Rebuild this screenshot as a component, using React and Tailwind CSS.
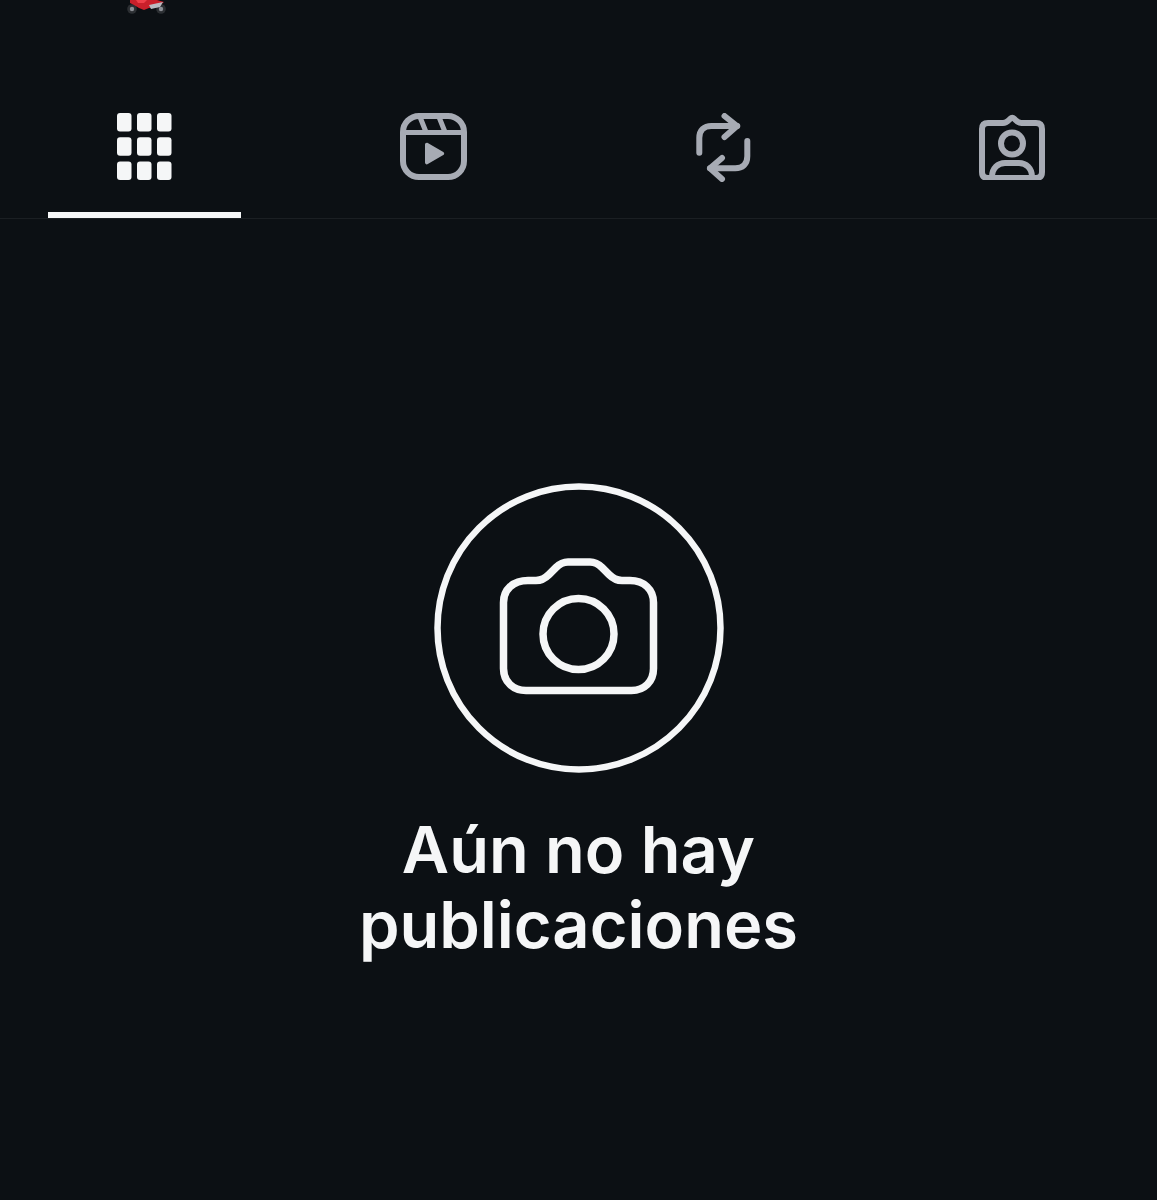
const gridCells = [0, 24.200, 48.400].flatMap((y) =>
  [0, 20, 40].map((x) => ({ x, y }))
);

function Moto() {
  return (
    <svg width="44" height="15" viewBox="0 0 44 15" fill="none">
      <circle cx="7" cy="9" r="4.800" fill="#2c2f33" />
      <circle cx="7" cy="9" r="2.200" fill="#8b8e94" />
      <circle cx="36" cy="9" r="4.800" fill="#2c2f33" />
      <circle cx="36" cy="9" r="2.200" fill="#8b8e94" />
      <path d="M5 0h27l7 2-6 5-9 1-5 2-5-2-5-3-4-2z" fill="#c9202b" />
      <path d="M24 5l14-3-3 5-9 2z" fill="#b9bcc2" />
      <path d="M11 0h11l-3 3h-6z" fill="#ee3f49" />
    </svg>
  );
}

function GridIcon() {
  return (
    <svg width="55" height="67" viewBox="0 0 55 67" fill="#f5f6f7">
      {gridCells.map((c) => (
        <rect key={`${c.x}-${c.y}`} x={c.x} y={c.y} width="14.500" height="18.500" rx="3" />
      ))}
    </svg>
  );
}

function ReelsIcon() {
  return (
    <svg width="67" height="67" viewBox="0 0 67 67" fill="none" stroke="#a7abb4" strokeWidth="6">
      <rect x="3" y="3" width="61" height="61" rx="16" />
      <path d="M3 19.500h61" strokeWidth="5" />
      <path d="M20 4l6 15M39 4l6 15" strokeWidth="5" />
      <path
        d="M25 31.500c0-1.500 1.500-2.300 2.800-1.600l15.500 9c1.200.7 1.200 2.500 0 3.200l-15.500 9c-1.300.8-2.800-.1-2.800-1.600z"
        fill="#a7abb4"
        stroke="none"
      />
    </svg>
  );
}

function RepostIcon() {
  return (
    <svg width="55" height="69" viewBox="0 0 55 69" fill="none" stroke="#a7abb4" strokeWidth="6" strokeLinecap="round" strokeLinejoin="round">
      <path d="M3.300 39.700V25c0-8 5-12 12-12h26" />
      <path d="M28.500 3l12.500 10-12.500 11" />
      <path d="M51.300 28v15.300c0 8-5 12-12 12H14" />
      <path d="M26 45L14 55.300 26 66" />
    </svg>
  );
}

function TaggedIcon() {
  return (
    <svg width="68" height="67" viewBox="0 0 68 67" fill="none" stroke="#a7abb4" strokeWidth="6" strokeLinejoin="round">
      <path d="M10 10h15c3 0 4-1 6-3l1.500-1.500c1-1 2.500-1 3.500 0L37.500 7c2 2 3 3 6 3H58c4 0 6 2 6 6v43c0 4-2 6-6 6H10c-4 0-6-2-6-6V16c0-4 2-6 6-6z" />
      <circle cx="34" cy="30.500" r="11" />
      <path d="M14 64c0-9 6-14 13-14h14c7 0 13 5 13 14" />
    </svg>
  );
}

function CameraEmpty() {
  return (
    <svg width="290" height="290" viewBox="0 0 290 290" fill="none" stroke="#f5f6f7">
      <circle cx="145" cy="145" r="141.500" strokeWidth="6.500" />
      <path
        d="M94 97.500h8c6 0 9-2 13-6l7-7c4-4 7-5.500 12-5.500h22c5 0 8 1.500 12 5.500l7 7c4 4 7 6 13 6h8c14 0 23.500 9 23.500 22v66c0 13-9 22-22 22H92c-13 0-22.500-9-22.500-22v-66c0-13 9.500-22 24.500-22z"
        strokeWidth="7.500"
        strokeLinejoin="round"
      />
      <circle cx="144.500" cy="151" r="35.500" strokeWidth="7.500" />
    </svg>
  );
}

const tabs = [GridIcon, ReelsIcon, RepostIcon, TaggedIcon];

export default function App() {
  return (
    <div className="h-[1200px] bg-[#0c1014] font-['Inter',sans-serif] overflow-hidden">
      <div className="h-[14px] pl-[125px] overflow-hidden">
        <Moto />
      </div>

      {/* tabs */}
      <div className="grid grid-cols-4 h-[205px] border-b border-[#1b1f23]">
        {tabs.map((Icon, i) => (
          <div key={i} className="flex flex-col items-center pt-[99px]">
            <Icon />
            {i === 0 && <div className="w-[193px] h-[6px] mt-[32px] bg-[#f5f6f7]" />}
          </div>
        ))}
      </div>

      {/* empty state */}
      <div className="flex flex-col items-center pt-[264px]">
        <CameraEmpty />
        <h2 className="mt-[39px] text-center text-[#f5f6f7] text-[65px] leading-[75px] font-semibold">
          Aún no hay
          <br />
          publicaciones
        </h2>
      </div>
    </div>
  );
}
